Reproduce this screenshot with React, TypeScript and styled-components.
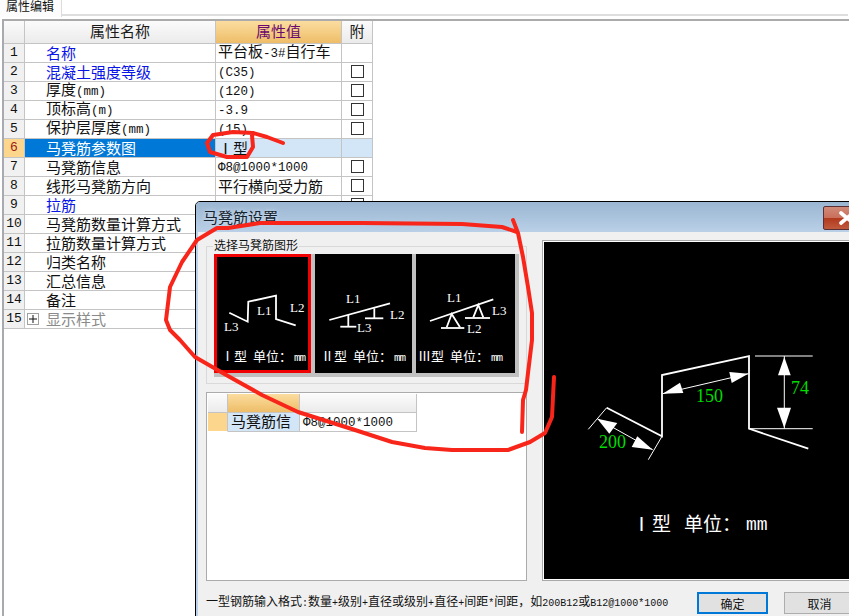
import React from 'react';
import styled, { createGlobalStyle } from 'styled-components';

const CJK = '"Noto Sans CJK SC", "Noto Sans", sans-serif';
const MONO = '"Liberation Mono", monospace';
const SERIF = '"Liberation Serif", serif';

const Global = createGlobalStyle`
  html, body { margin: 0; padding: 0; background: #fff; overflow: hidden; }
  * { box-sizing: border-box; }
`;

const Page = styled.div`
  position: relative;
  width: 849px;
  height: 616px;
  overflow: hidden;
  display: flex;
  flex-direction: column;
  font-family: ${CJK};
  color: #111;
`;

const TabStrip = styled.div`
  display: flex;
  height: 17px;
  flex: none;
`;
const Tab = styled.div`
  width: 62px;
  height: 17px;
  padding-left: 6px;
  border-right: 1px solid #dcdcdc;
  font-size: 12px;
  line-height: 12px;
  background: #fcfcfc;
`;
const TabFiller = styled.div`
  flex: 1;
  height: 17px;
  border-bottom: 2px solid #dedede;
  margin-right: 1px;
  margin-top: -1px;
`;

const Pane = styled.div`
  margin: 2px 0 0 2px;
  flex: 1;
  border-left: 2px solid #a9a9b2;
  border-top: 2px solid #ababab;
  min-height: 0;
`;
const PropGrid = styled.div`
  display: grid;
  grid-template-columns: 21px 191px 126px 31px;
  grid-template-rows: 23px;
  grid-auto-rows: 19px;
  width: 369px;
  line-height: 16px;
  & > * { border-right: 1px solid #c4c4c4; border-bottom: 1px solid #c4c4c4; padding-bottom: 1px; }
`;
const HeadCell = styled.div<{ $gold?: boolean }>`
  display: flex;
  align-items: center;
  justify-content: center;
  font-size: 15px;
  && { padding-bottom: 3px; }
  color: ${p => (p.$gold ? '#6b0a6e' : '#1a1a1a')};
  background: ${p =>
    p.$gold ? 'linear-gradient(#fbdd9f, #eebd68)' : 'linear-gradient(#fbfbfb, #ebebeb)'};
`;
const NumCell = styled.div<{ $active?: boolean }>`
  display: flex;
  align-items: center;
  justify-content: center;
  font-family: ${MONO};
  font-size: 13px;
  background: ${p => (p.$active ? '#fdd68d' : '#f1f1f1')};
  color: ${p => (p.$active ? '#9a1a10' : '#111')};
`;
const NameCell = styled.div<{ $link?: boolean; $active?: boolean; $muted?: boolean }>`
  display: flex;
  align-items: center;
  padding-left: 21px;
  font-size: 15px;
  white-space: nowrap;
  color: ${p => (p.$active ? '#fff' : p.$link ? '#0a14e6' : p.$muted ? '#8a8a8a' : '#111')};
  background: ${p => (p.$active ? '#0078d7' : '#fff')};
`;
const ValueCell = styled.div<{ $active?: boolean }>`
  display: flex;
  align-items: center;
  padding-left: 2px;
  font-size: 15px;
  white-space: nowrap;
  background: ${p => (p.$active ? '#d3e6f8' : '#fff')};
`;
const FlagCell = styled.div<{ $active?: boolean }>`
  display: flex;
  align-items: center;
  justify-content: center;
  background: ${p => (p.$active ? '#d3e6f8' : '#fff')};
`;
const Check = styled.span`
  width: 13px;
  height: 13px;
  border: 1px solid #333;
  background: #fff;
`;
const Expander = styled.span`
  width: 12px;
  height: 12px;
  margin: 0 7px 0 -19px;
  border: 1px solid #a0a0a0;
  display: inline-flex;
  align-items: center;
  justify-content: center;
  flex: none;
`;
const Half = styled.span`
  font-family: ${MONO};
  font-size: 12.5px;
`;

const Dialog = styled.div`
  position: absolute;
  left: 195px;
  top: 201px;
  width: 700px;
  height: 440px;
  border: 1px solid #000;
  border-top-left-radius: 5px;
  background: #f0f0f0;
  display: flex;
  flex-direction: column;
`;
const TitleBar = styled.div`
  height: 30px;
  flex: none;
  display: flex;
  align-items: center;
  justify-content: space-between;
  padding: 0 24px 0 7px;
  background: linear-gradient(#9bb6d2, #b9d0e7);
  border-top-left-radius: 4px;
`;
const TitleText = styled.span`
  font-size: 15px;
  color: #15222e;
  text-shadow: 0 0 4px #dce8f3;
  margin-top: -2px;
`;
const CloseButton = styled.div`
  width: 47px;
  height: 24px;
  margin-top: 2px;
  border: 1px solid #5a2f35;
  border-radius: 2px;
  background: linear-gradient(#d08a78 0%, #c9705c 48%, #b23a1e 52%, #c05a3c 100%);
  display: flex;
  align-items: center;
  justify-content: center;
`;
const DialogBody = styled.div`
  flex: 1;
  border-left: 2px solid #b9d1ea;
  padding: 8px 0 0 8px;
  display: flex;
  flex-direction: column;
`;
const Columns = styled.div`
  display: flex;
  gap: 15px;
`;
const LeftColumn = styled.div`
  width: 321px;
  flex: none;
  padding-top: 6px;
  display: flex;
  flex-direction: column;
  gap: 8px;
`;
const GroupBox = styled.div`
  position: relative;
  border: 1px solid #d9d9d9;
  padding: 7px 7px 6px;
`;
const Legend = styled.span`
  position: absolute;
  left: 6px;
  top: -9px;
  padding: 0 1px;
  font-size: 12px;
  line-height: 14px;
  background: #f0f0f0;
  color: #111;
`;
const ThumbPanel = styled.div`
  display: grid;
  grid-template-columns: 97px 97px 99px;
  gap: 4px;
  width: 305px;
  padding: 0 4px 4px 0;
  background: #c0c0c0;
`;
const Thumb = styled.div<{ $selected?: boolean }>`
  height: 119px;
  background: #000;
  color: #fff;
  display: flex;
  flex-direction: column;
  box-shadow: ${p => (p.$selected ? 'inset 0 0 0 3px #f00000' : 'none')};
`;
const ThumbArt = styled.svg<{ $wide?: boolean }>`
  width: ${p => (p.$wide ? 99 : 97)}px;
  height: 92px;
  flex: none;
  display: block;
`;
const ThumbCaption = styled.div<{ $indent: number }>`
  padding-left: ${p => p.$indent}px;
  font-size: 13px;
  line-height: 18px;
  margin-top: 1px;
  white-space: nowrap;
  word-spacing: 3px;
`;
const CaptionUnit = styled.span`
  font-family: ${MONO};
  font-size: 11px;
  letter-spacing: -1px;
  margin-left: 2px;
`;
const SubGrid = styled.div`
  height: 189px;
  border: 1px solid #ababab;
  background: #fff;
  padding: 1px;
  display: grid;
  grid-template-columns: 20px 72px 117px;
  grid-auto-rows: min-content;
  align-content: start;
`;
const SubHead = styled.div<{ $gold?: boolean }>`
  height: 19px;
  border-right: 1px solid #c4c4c4;
  border-bottom: 1px solid #c4c4c4;
  background: ${p =>
    p.$gold ? 'linear-gradient(#fbdd9f, #eebd68)' : 'linear-gradient(#fbfbfb, #ebebeb)'};
`;
const SubNum = styled.div`
  height: 19px;
  background: #fdd68d;
  border-right: 1px solid #c4c4c4;
  border-bottom: 1px solid #fff;
`;
const SubCell = styled.div<{ $active?: boolean }>`
  height: 19px;
  padding: 0 0 2px 3px;
  display: flex;
  align-items: center;
  white-space: nowrap;
  font-size: 15px;
  line-height: 16px;
  border-right: 1px solid #c4c4c4;
  border-bottom: 1px solid #c4c4c4;
  background: ${p => (p.$active ? '#d3e6f8' : '#fff')};
`;
const Preview = styled.div`
  width: 340px;
  height: 341px;
  flex: none;
  border: 1px solid #a8a8a8;
  padding: 1px;
  background: #fff;
`;
const PreviewArt = styled.svg`
  display: block;
  width: 336px;
  height: 337px;
  background: #000;
`;
const Footer = styled.div`
  margin-top: 11px;
  display: flex;
  align-items: center;
`;
const Hint = styled.div`
  width: 491px;
  flex: none;
  font-size: 12px;
  line-height: 16px;
  padding-bottom: 1px;
  white-space: nowrap;
  color: #111;
`;
const HintLatin = styled.span`
  font-family: ${MONO};
  font-size: 10px;
`;
const Buttons = styled.div`
  display: flex;
  gap: 16px;
`;
const DialogButton = styled.div<{ $primary?: boolean }>`
  width: 71px;
  height: 22px;
  display: flex;
  align-items: center;
  justify-content: center;
  font-size: 12px;
  background: #e1e1e1;
  border: ${p => (p.$primary ? '2px solid #0078d7' : '1px solid #adadad')};
`;
const Annotation = styled.svg`
  position: absolute;
  left: 0;
  top: 0;
  width: 849px;
  height: 616px;
  pointer-events: none;
`;

function mix(text: string, Latin: React.ElementType = Half) {
  return (
    <span>
      {text.split(/([\x20-\x7eΦ]+)/).filter(Boolean).map((part, i) =>
        /^[\x20-\x7eΦ]+$/.test(part) ? <Latin key={i}>{part}</Latin> : <React.Fragment key={i}>{part}</React.Fragment>
      )}
    </span>
  );
}

type Row = { name: string; value?: string; link?: boolean; check?: boolean; active?: boolean; muted?: boolean; expand?: boolean };
const rows: Row[] = [
  { name: '名称', value: '平台板-3#自行车', link: true },
  { name: '混凝土强度等级', value: '(C35)', link: true, check: true },
  { name: '厚度(mm)', value: '(120)', check: true },
  { name: '顶标高(m)', value: '-3.9', check: true },
  { name: '保护层厚度(mm)', value: '(15)', check: true },
  { name: '马凳筋参数图', value: 'Ⅰ型', active: true },
  { name: '马凳筋信息', value: 'Φ8@1000*1000', check: true },
  { name: '线形马凳筋方向', value: '平行横向受力筋', check: true },
  { name: '拉筋', link: true, check: true },
  { name: '马凳筋数量计算方式' },
  { name: '拉筋数量计算方式' },
  { name: '归类名称' },
  { name: '汇总信息' },
  { name: '备注' },
  { name: '显示样式', muted: true, expand: true },
];

const Label = ({ x, y, children }: { x: number; y: number; children: string }) => (
  <text x={x} y={y} fill="#fff" fontFamily={SERIF} fontSize="13">{children}</text>
);

const ArtOne = () => (
  <ThumbArt viewBox="0 0 97 92">
    <polyline points="15.3,58.7 33.7,67.7 34.3,47.7 62,41.7 62,65 81.7,71.3" fill="none" stroke="#fff" strokeWidth="1.8" />
    <Label x={43} y={61}>L1</Label>
    <Label x={76} y={58}>L2</Label>
    <Label x={10} y={77}>L3</Label>
  </ThumbArt>
);
const ArtTwo = () => (
  <ThumbArt viewBox="0 0 97 92">
    <g fill="none" stroke="#fff" strokeWidth="1.8">
      <line x1="14.3" y1="66" x2="75" y2="49.3" />
      <line x1="33.3" y1="61" x2="33.3" y2="72.7" />
      <line x1="25.3" y1="72.7" x2="41.3" y2="72.7" />
      <line x1="59.3" y1="54.3" x2="59.3" y2="64.3" />
      <line x1="50" y1="64.3" x2="68.3" y2="64.3" />
    </g>
    <Label x={31} y={49}>L1</Label>
    <Label x={75} y={65}>L2</Label>
    <Label x={42} y={78}>L3</Label>
  </ThumbArt>
);
const ArtThree = () => (
  <ThumbArt $wide viewBox="0 0 99 92">
    <g fill="none" stroke="#fff" strokeWidth="1.8">
      <line x1="14" y1="67" x2="77.3" y2="45.3" />
      <polyline points="30.7,73.3 35.7,60 44,73.3" />
      <line x1="25" y1="74" x2="48.3" y2="74" />
      <polyline points="57.3,63.3 62.3,51 67.3,63.3" />
      <line x1="49" y1="64" x2="74" y2="64" />
    </g>
    <Label x={31} y={48}>L1</Label>
    <Label x={76} y={61}>L3</Label>
    <Label x={51} y={79}>L2</Label>
  </ThumbArt>
);

const Dim = ({ x, y, children }: { x: number; y: number; children: string }) => (
  <text x={x} y={y} fill="#00dc00" fontFamily={SERIF} fontSize="18">{children}</text>
);

const PreviewDrawing = () => (
  <PreviewArt viewBox="0 0 336 337">
    <polyline points="62.7,165.7 118,194.3 118,133 205,114 205,186.7 264.3,206.7" fill="none" stroke="#fff" strokeWidth="1.8" />
    <g stroke="#fff" strokeWidth="1" fill="none">
      <line x1="62.7" y1="165.7" x2="44.3" y2="187.3" />
      <line x1="118" y1="194.3" x2="104.3" y2="217.7" />
      <line x1="53.3" y1="176.7" x2="108.7" y2="207.7" />
      <line x1="118.7" y1="151.7" x2="204.3" y2="131.7" />
      <line x1="211" y1="114" x2="268.7" y2="114" />
      <line x1="205" y1="186.7" x2="268.7" y2="186.7" />
      <line x1="240.3" y1="114" x2="240.3" y2="186.7" />
    </g>
    <g fill="#fff">
      <polygon points="53.3,176.7 73.3,181 65.3,191.7" />
      <polygon points="108.7,207.7 93.3,194.3 87.7,205" />
      <polygon points="118.7,151.7 136,140.7 139.3,151" />
      <polygon points="204.3,131.7 185.3,130 187.7,141" />
      <polygon points="240.3,115 234,133.3 246.7,133.3" />
      <polygon points="240.3,186 233,165.7 247,165.7" />
    </g>
    <Dim x={55} y={206}>200</Dim>
    <Dim x={152} y={160}>150</Dim>
    <Dim x={247} y={152}>74</Dim>
    <text x={88} y={289} fill="#fff" fontFamily={CJK} fontSize="19">Ⅰ</text>
    <text x={108} y={289} fill="#fff" fontFamily={CJK} fontSize="19">型</text>
    <text x={140} y={289} fill="#fff" fontFamily={CJK} fontSize="19">单位：</text>
    <text x={202} y={288} fill="#fff" fontFamily={MONO} fontSize="18">mm</text>
  </PreviewArt>
);

export default function App() {
  return (
    <Page>
      <Global />
      <TabStrip>
        <Tab>属性编辑</Tab>
        <TabFiller />
      </TabStrip>
      <Pane>
        <PropGrid>
          <HeadCell />
          <HeadCell>属性名称</HeadCell>
          <HeadCell $gold>属性值</HeadCell>
          <HeadCell>附</HeadCell>
          {rows.map((r, i) => (
            <React.Fragment key={r.name}>
              <NumCell $active={r.active}>{i + 1}</NumCell>
              <NameCell $link={r.link} $active={r.active} $muted={r.muted}>
                {r.expand && (
                  <Expander>
                    <svg width="8" height="8" viewBox="0 0 8 8"><path d="M4 0V8M0 4H8" stroke="#111" strokeWidth="1" /></svg>
                  </Expander>
                )}
                {mix(r.name)}
              </NameCell>
              <ValueCell $active={r.active}>{r.value ? mix(r.value) : null}</ValueCell>
              <FlagCell $active={r.active}>{r.check && <Check />}</FlagCell>
            </React.Fragment>
          ))}
        </PropGrid>
      </Pane>

      <Dialog>
        <TitleBar>
          <TitleText>马凳筋设置</TitleText>
          <CloseButton>
            <svg width="18" height="14" viewBox="0 0 18 14">
              <path d="M3 2L15 12M15 2L3 12" stroke="#fff" strokeWidth="3.6" strokeLinecap="round" />
            </svg>
          </CloseButton>
        </TitleBar>
        <DialogBody>
          <Columns>
            <LeftColumn>
              <GroupBox>
                <Legend>选择马凳筋图形</Legend>
                <ThumbPanel>
                  <Thumb $selected>
                    <ArtOne />
                    <ThumbCaption $indent={7}>Ⅰ型 单位：<CaptionUnit>mm</CaptionUnit></ThumbCaption>
                  </Thumb>
                  <Thumb>
                    <ArtTwo />
                    <ThumbCaption $indent={6}>Ⅱ型 单位：<CaptionUnit>mm</CaptionUnit></ThumbCaption>
                  </Thumb>
                  <Thumb>
                    <ArtThree />
                    <ThumbCaption $indent={2}>Ⅲ型 单位：<CaptionUnit>mm</CaptionUnit></ThumbCaption>
                  </Thumb>
                </ThumbPanel>
              </GroupBox>
              <SubGrid>
                <SubHead />
                <SubHead $gold />
                <SubHead />
                <SubNum />
                <SubCell $active>马凳筋信</SubCell>
                <SubCell>{mix('Φ8@1000*1000')}</SubCell>
              </SubGrid>
            </LeftColumn>
            <Preview>
              <PreviewDrawing />
            </Preview>
          </Columns>
          <Footer>
            <Hint>{mix('一型钢筋输入格式:数量+级别+直径或级别+直径+间距*间距，如200B12或B12@1000*1000', HintLatin)}</Hint>
            <Buttons>
              <DialogButton $primary>确定</DialogButton>
              <DialogButton>取消</DialogButton>
            </Buttons>
          </Footer>
        </DialogBody>
      </Dialog>

      <Annotation viewBox="0 0 849 616">
        <g fill="none" stroke="#f8261a" strokeWidth="4" strokeLinecap="round" strokeLinejoin="round">
          <path d="M283 143 L267 137 L253 133 L233 132 L213 135 L207 143 L210 152 L227 157 L247 157 L253 147 L252 135" />
          <path d="M513 220 L518 233 L523 257 L528 287 L532 313 L532 340 L528 373 L526 390 L523 400 L522 432" />
          <path d="M517 232 L502 227 L462 224 L362 223 L285 223 L260 223 L228 228 L217 228 L197 240 L182 262 L170 287 L166 320 L170 330 L180 340 L195 357 L228 376 L262 395 L298 412 L355 430 L392 442 L425 448 L452 450 L508 450 L530 442 L545 433 L552 417 L554 377" />
        </g>
      </Annotation>
    </Page>
  );
}
